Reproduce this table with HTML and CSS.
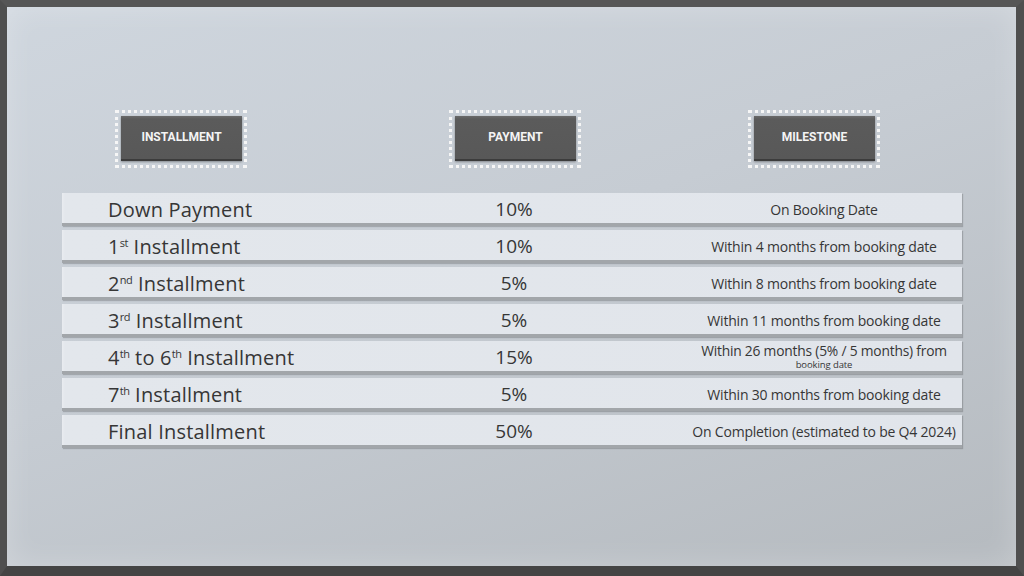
FILE: index.html
```html
<!DOCTYPE html>
<html lang="en">
<head>
<meta charset="utf-8">
<title>Payment Plan</title>
<link rel="stylesheet" href="styles.css">
</head>
<body>
<div class="frame">
  <div class="panel">
    <div class="heads">
      <div class="head head-1"><div class="head-box">INSTALLMENT</div></div>
      <div class="head head-2"><div class="head-box">PAYMENT</div></div>
      <div class="head head-3"><div class="head-box">MILESTONE</div></div>
    </div>
    <div class="table">
      <div class="row">
        <div class="c1">Down Payment</div>
        <div class="c2">10%</div>
        <div class="c3">On Booking Date</div>
      </div>
      <div class="row">
        <div class="c1">1<sup>st</sup> Installment</div>
        <div class="c2">10%</div>
        <div class="c3">Within 4 months from booking date</div>
      </div>
      <div class="row">
        <div class="c1">2<sup>nd</sup> Installment</div>
        <div class="c2">5%</div>
        <div class="c3">Within 8 months from booking date</div>
      </div>
      <div class="row">
        <div class="c1">3<sup>rd</sup> Installment</div>
        <div class="c2">5%</div>
        <div class="c3">Within 11 months from booking date</div>
      </div>
      <div class="row">
        <div class="c1">4<sup>th</sup> to 6<sup>th</sup> Installment</div>
        <div class="c2">15%</div>
        <div class="c3 two"><span class="big">Within 26 months (5% / 5 months) from</span><span class="small">booking date</span></div>
      </div>
      <div class="row">
        <div class="c1">7<sup>th</sup> Installment</div>
        <div class="c2">5%</div>
        <div class="c3">Within 30 months from booking date</div>
      </div>
      <div class="row">
        <div class="c1">Final Installment</div>
        <div class="c2">50%</div>
        <div class="c3">On Completion (estimated to be Q4 2024)</div>
      </div>
    </div>
  </div>
</div>
</body>
</html>
```

FILE: styles.css
```css
* { box-sizing: border-box; }
html, body { margin: 0; padding: 0; }
body {
  width: 1024px;
  height: 576px;
  overflow: hidden;
  background: #4d4d4d;
  font-family: "Open Sans", "Liberation Sans", sans-serif;
}
.frame {
  width: 1024px;
  height: 576px;
  border-top: 7px solid #565656;
  border-left: 7px solid #4f4f4f;
  border-right: 8px solid #4f4f4f;
  border-bottom: 10px solid #444;
  background: linear-gradient(160deg, #cfd6de 0%, #c6ccd3 45%, #b5babf 100%);
}
.panel {
  width: 100%;
  height: 100%;
  padding: 103px 0 0 55px;
  box-shadow: inset 0 0 30px rgba(255,255,255,0.25);
}
.heads {
  display: grid;
  grid-template-columns: 300px 304px 296px;
  width: 900px;
}
.head {
  width: 132px;
  height: 58px;
  border: 3px dotted #f6f6f6;
  padding: 3px 2px 4px 3px;
}
.head-1 { margin-left: 53px; }
.head-2 { justify-self: center; margin-left: 2px; }
.head-3 { margin-left: 82px; }
.head-box {
  height: 100%;
  background: linear-gradient(#6a6a6a 0, #5b5b5b 3px, #585858 100%);
  border-bottom: 2px solid #3c3c3c;
  box-shadow: 0 1px 2px rgba(0,0,0,0.35);
  color: #f4f4f4;
  font-family: Roboto, "Liberation Sans", sans-serif;
  font-weight: 700;
  font-size: 12px;
  display: flex;
  align-items: center;
  justify-content: center;
  padding-bottom: 2px;
}
.table {
  margin-top: 25px;
  width: 900px;
  display: flex;
  flex-direction: column;
  gap: 4px;
}
.row {
  height: 33px;
  display: grid;
  grid-template-columns: 300px 304px 296px;
  align-items: center;
  padding-top: 2px;
  background: linear-gradient(90deg, #e9ecf0 0, #e3e7ec 3px, #e1e5eb 100%);
  border-bottom: 3px solid #a2a6aa;
  box-shadow: 1px 1px 1px rgba(0,0,0,0.18);
  color: #363636;
}
.c1 {
  padding-left: 46px;
  font-size: 20px;
  font-weight: 500;
  letter-spacing: 0.2px;
}
.c2 {
  text-align: center;
  font-size: 19px;
  font-weight: 500;
}
.c3 {
  padding-left: 20px;
  text-align: center;
  font-size: 14px;
  letter-spacing: -0.2px;
}
.c3.two {
  display: flex;
  flex-direction: column;
  align-items: center;
  margin-top: -2px;
}
.c3 .big { font-size: 13.8px; line-height: 19px; }
.c3 .small { font-size: 9.5px; line-height: 13px; letter-spacing: -0.1px; margin-top: -2px; }
sup {
  font-size: 11px;
  letter-spacing: -0.3px;
  vertical-align: 0;
  position: relative;
  top: -7px;
  margin-left: 0;
}
```
